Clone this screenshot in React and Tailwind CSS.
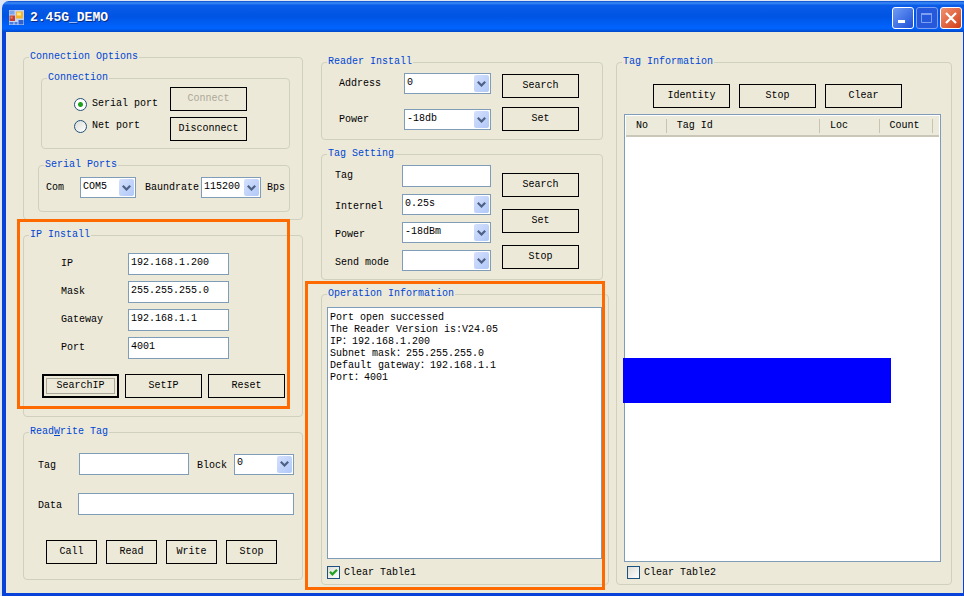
import { useId, useState } from 'react'

// ── Small controls ────────────────────────────────────────────────────────────
function Group({ title, className = '', bodyClass = '', children }) {
  return (
    <fieldset className={`relative min-w-0 rounded-[4px] border border-[#d0d0bf] ${className}`}>
      <legend className="ml-[5px] px-px text-[10px] leading-3 text-[#0046d5]">{title}</legend>
      <div className={bodyClass}>{children}</div>
    </fieldset>
  )
}

function Button({ className = 'w-[77px]', focused, children, ...rest }) {
  return (
    <button
      type="button"
      className={[
        'h-6 p-0.5 text-center leading-3 disabled:text-[#aca899]',
        focused ? 'border-2 border-black' : 'border border-black',
        className,
      ].join(' ')}
      {...rest}
    >
      {focused ? (
        <span className="block h-full border border-[#aca899] leading-[14px]">{children}</span>
      ) : (
        children
      )}
    </button>
  )
}

function TextBox({ className = '', ...rest }) {
  return (
    <input
      type="text"
      className={`h-[22px] min-w-0 border border-[#7f9db9] bg-white px-0.5 pb-1 outline-none ${className}`}
      {...rest}
    />
  )
}

function Select({ className = '', options, ...rest }) {
  return (
    <span className={`relative block h-[21px] ${className}`}>
      <select
        className="block h-full w-full appearance-none border border-[#7f9db9] bg-white pr-4 pb-0.5 pl-0.5 outline-none"
        {...rest}
      >
        {options.map((o) => (
          <option key={o}>{o}</option>
        ))}
      </select>
      <span className="pointer-events-none absolute top-0.5 right-0.5 bottom-0.5 flex w-[15px] items-center justify-center rounded-[2px] bg-linear-to-br from-[#d5e0fd] to-[#b0c8f8]">
        <svg width="9" height="6" viewBox="0 0 9 6" fill="none" stroke="#4d6185" strokeWidth="2.2">
          <path d="M0.8 0.8 4.5 4.5 8.2 0.8" />
        </svg>
      </span>
    </span>
  )
}

function Radio({ label, ...rest }) {
  return (
    <label className="flex h-[22px] items-center gap-[5px]">
      <input
        type="radio"
        className="size-[13px] appearance-none rounded-full border border-[#21517b] bg-linear-to-br from-[#dcdcd7] to-white checked:bg-[radial-gradient(circle,#21a121_0_2px,#fff_3px)]"
        {...rest}
      />
      {label}
    </label>
  )
}

function CheckBox({ label, ...rest }) {
  return (
    <label className="flex items-center gap-1">
      <span className="relative block size-[13px]">
        <input
          type="checkbox"
          className="peer block size-[13px] appearance-none border border-[#1c5180] bg-linear-to-br from-[#dcdcd7] to-white"
          {...rest}
        />
        <svg
          className="pointer-events-none absolute inset-0 hidden peer-checked:block"
          width="13" height="13" viewBox="0 0 13 13"
          fill="none" stroke="#21a121" strokeWidth="2.2"
        >
          <path d="M3 5.8 5.4 8.4 10 3.8" />
        </svg>
      </span>
      {label}
    </label>
  )
}

// ── Title bar ─────────────────────────────────────────────────────────────────
function AppIcon() {
  return (
    <svg width="15" height="15" viewBox="0 0 15 15">
      <rect width="15" height="15" fill="#c3d5f5" />
      <rect x="0.5" y="0.5" width="5" height="4" fill="#7ea3e6" />
      <rect x="0.5" y="5.5" width="5.5" height="5.5" fill="#c8402c" />
      <rect x="1.5" y="6.5" width="2" height="2" fill="#e8836c" />
      <rect x="7" y="1.5" width="7" height="7" fill="#f2b62c" />
      <rect x="8" y="2.5" width="4" height="3" fill="#ffe48c" />
      <rect x="0.5" y="12" width="4" height="2.5" fill="#4a7ade" />
      <rect x="5.5" y="12" width="3" height="2.5" fill="#4a7ade" />
      <rect x="9.5" y="10" width="5" height="4.5" fill="#2f62cf" />
    </svg>
  )
}

const CAPTION = 'flex size-[22px] items-center justify-center rounded-[3px] border'

function TitleBar() {
  return (
    <header className="flex h-[31px] items-center gap-[6px] rounded-tl-[7px] bg-[linear-gradient(#0a48c8_0%,#3c8cf8_6%,#0a5ce8_14%,#0054e3_50%,#0064ff_88%,#0048c8_100%)] pt-0.5 pr-0.5 pl-[7px]">
      <AppIcon />
      <h1 className="flex-1 text-[13px] leading-4 font-bold text-white [text-shadow:1px_1px_#0a2a80]">
        2.45G_DEMO
      </h1>
      <div className="flex gap-0.5">
        <button type="button" aria-label="Minimize" className={`${CAPTION} border-white bg-linear-to-br from-[#6f9bf5] to-[#1f4fd8]`}>
          <svg width="14" height="14" viewBox="0 0 14 14"><rect x="2" y="9" width="7" height="3" fill="#fff" /></svg>
        </button>
        <button type="button" aria-label="Maximize" disabled className={`${CAPTION} border-[#7f9ff0] bg-[#2558da]`}>
          <svg width="14" height="14" viewBox="0 0 14 14" fill="none" stroke="#7f9ff0">
            <path d="M1.5 2.5h10v9h-10z" />
            <path d="M1 3h11" strokeWidth="2" />
          </svg>
        </button>
        <button type="button" aria-label="Close" className={`${CAPTION} border-white bg-linear-to-br from-[#f0906f] to-[#d03a10]`}>
          <svg width="14" height="14" viewBox="0 0 14 14" stroke="#fff" strokeWidth="2.2"><path d="M2 2 12 12M12 2 2 12" /></svg>
        </button>
      </div>
    </header>
  )
}

// ── Left column ───────────────────────────────────────────────────────────────
function ConnectionOptions() {
  const id = useId()
  const [mode, setMode] = useState('serial')

  return (
    <Group title="Connection Options" bodyClass="pt-[9px] pr-3 pb-[7px] pl-[14px]">
      <Group title="Connection" className="ml-[3px]" bodyClass="flex gap-3 pt-[3px] pb-[7px] pl-8">
        <div className="pt-[6px]">
          <Radio name="mode" label="Serial port" checked={mode === 'serial'} onChange={() => setMode('serial')} />
          <Radio name="mode" label="Net port" checked={mode === 'net'} onChange={() => setMode('net')} />
        </div>
        <div className="flex flex-col gap-[6px]">
          <Button disabled>Connect</Button>
          <Button>Disconnect</Button>
        </div>
      </Group>

      <Group title="Serial Ports" className="mt-2.5" bodyClass="flex items-center pt-[6px] pb-[13px] pl-[7px]">
        <label htmlFor={`${id}com`} className="w-[34px]">Com</label>
        <Select id={`${id}com`} className="w-14" options={['COM5']} />
        <label htmlFor={`${id}baud`} className="ml-[9px] w-14">Baundrate</label>
        <Select id={`${id}baud`} className="w-[60px]" options={['115200']} />
        <span className="ml-[6px]">Bps</span>
      </Group>
    </Group>
  )
}

const IP_FIELDS = [
  ['IP', '192.168.1.200'],
  ['Mask', '255.255.255.0'],
  ['Gateway', '192.168.1.1'],
  ['Port', '4001'],
]

function IpInstall() {
  return (
    <Group title="IP Install" bodyClass="pt-3 pb-[18px]">
      <div className="flex flex-col gap-[6px] pl-[37px]">
        {IP_FIELDS.map(([label, value]) => (
          <label key={label} className="flex items-center">
            <span className="w-[67px]">{label}</span>
            <TextBox className="w-[101px]" defaultValue={value} />
          </label>
        ))}
      </div>
      <div className="flex gap-[6px] pt-[15px] pl-[18px]">
        <Button focused>SearchIP</Button>
        <Button>SetIP</Button>
        <Button>Reset</Button>
      </div>
      <div className="pointer-events-none absolute -top-[22px] right-3 bottom-[7px] -left-[7px] border-3 border-[#ff6a00]" />
    </Group>
  )
}

function ReadWriteTag() {
  const id = useId()

  return (
    <Group title={<>Read<u>W</u>rite Tag</>} bodyClass="pt-[15px] pr-2 pb-[15px] pl-[14px]">
      <div className="flex items-center">
        <label htmlFor={`${id}tag`} className="w-[41px] pt-1">Tag</label>
        <TextBox id={`${id}tag`} className="flex-1" />
        <label htmlFor={`${id}block`} className="w-[45px] pt-1 pl-2">Block</label>
        <Select id={`${id}block`} className="w-[60px]" options={['0']} />
      </div>
      <div className="flex items-center pt-[18px]">
        <label htmlFor={`${id}data`} className="w-10 pt-1">Data</label>
        <TextBox id={`${id}data`} className="flex-1" />
      </div>
      <div className="flex gap-[9px] pt-[25px] pl-2">
        {['Call', 'Read', 'Write', 'Stop'].map((t) => (
          <Button key={t} className="w-[51px]">{t}</Button>
        ))}
      </div>
    </Group>
  )
}

// ── Middle column ─────────────────────────────────────────────────────────────
function ReaderInstall() {
  return (
    <Group title="Reader Install" className="mr-[6px]" bodyClass="flex gap-[11px] pt-[5px] pb-2 pl-[17px]">
      <div className="flex flex-col gap-[15px]">
        <label className="flex items-center">
          <span className="w-[65px]">Address</span>
          <Select className="w-[87px]" options={['0']} />
        </label>
        <label className="flex items-center">
          <span className="w-[65px]">Power</span>
          <Select className="w-[87px]" options={['-18db']} />
        </label>
      </div>
      <div className="flex flex-col gap-[9px] pt-px">
        <Button>Search</Button>
        <Button>Set</Button>
      </div>
    </Group>
  )
}

const TAG_SELECTS = [
  ['Internel', '0.25s'],
  ['Power', '-18dBm'],
  ['Send mode', ''],
]

function TagSetting() {
  return (
    <Group title="Tag Setting" className="mr-[6px]" bodyClass="flex gap-[11px] pt-[5px] pb-2 pl-[13px]">
      <div className="flex flex-col gap-[7px]">
        <label className="flex items-center">
          <span className="w-[67px]">Tag</span>
          <TextBox className="w-[89px]" />
        </label>
        {TAG_SELECTS.map(([label, value]) => (
          <label key={label} className="flex items-center">
            <span className="w-[67px] pt-1">{label}</span>
            <Select className="w-[89px]" options={[value]} />
          </label>
        ))}
      </div>
      <div className="flex flex-col gap-3 pt-2">
        <Button>Search</Button>
        <Button>Set</Button>
        <Button>Stop</Button>
      </div>
    </Group>
  )
}

const LOG = `Port open successed
The Reader Version is:V24.05
IP：192.168.1.200
Subnet mask：255.255.255.0
Default gateway：192.168.1.1
Port：4001`

function OperationInformation() {
  return (
    <Group
      title="Operation Information"
      className="flex flex-1 flex-col"
      bodyClass="flex flex-1 flex-col pt-[7px] pr-[6px] pb-[5px] pl-[5px]"
    >
      <textarea
        aria-label="Operation Information"
        className="min-h-40 w-full flex-1 resize-none border border-[#7f9db9] bg-white px-0.5 py-1 leading-3 outline-none"
        defaultValue={LOG}
      />
      <div className="pt-[7px]">
        <CheckBox label="Clear Table1" defaultChecked />
      </div>
      <div className="pointer-events-none absolute -top-[19px] right-[3px] -bottom-[6px] -left-[17px] border-3 border-[#ff6a00]" />
    </Group>
  )
}

// ── Right column ──────────────────────────────────────────────────────────────
const COLUMNS = [
  ['No', 'w-[13%]'],
  ['Tag Id', 'w-[49%]'],
  ['Loc', 'w-[19%]'],
  ['Count', 'w-[17%]'],
]

function TagInformation() {
  return (
    <Group
      title="Tag Information"
      className="flex flex-1 flex-col"
      bodyClass="flex flex-1 flex-col pt-4 pr-[10px] pb-[5px] pl-[7px]"
    >
      <div className="flex gap-[9px] pl-[29px]">
        <Button>Identity</Button>
        <Button>Stop</Button>
        <Button>Clear</Button>
      </div>
      <div className="relative mt-[6px] min-h-40 flex-1 border border-[#7f9db9] bg-white p-px">
        <table className="w-full table-fixed border-b-2 border-[#cbc7b8] bg-[#ebeadb] text-left">
          <thead>
            <tr className="h-5">
              {COLUMNS.map(([name, width]) => (
                <th key={name} scope="col" className={`${width} p-0 font-normal`}>
                  <span className="block border-r border-[#c7c5b2] pl-[10px] leading-[14px]">{name}</span>
                </th>
              ))}
              <td />
            </tr>
          </thead>
        </table>
        <div className="absolute top-[54.5%] right-[49px] -left-0.5 h-[45px] bg-[#0000ff]" />
      </div>
      <div className="pt-1 pl-[3px]">
        <CheckBox label="Clear Table2" />
      </div>
    </Group>
  )
}

// ── Main window ───────────────────────────────────────────────────────────────
export default function App() {
  return (
    <div className="flex min-h-screen flex-col bg-[#dfe6f5] pt-px pl-0.5 font-['Liberation_Mono','Noto_Sans_CJK_SC',monospace] text-[10px] leading-3 text-black">
      <TitleBar />
      <main className="grid flex-1 grid-cols-[minmax(0,280fr)_minmax(0,299fr)_minmax(0,336fr)] gap-[7px] border-r border-b-3 border-l-4 border-[#0842d8] bg-[#ece9d8] pt-[19px] pr-[11px] pb-2 pl-[17px]">
        <div className="flex flex-col gap-[9px]">
          <ConnectionOptions />
          <IpInstall />
          <ReadWriteTag />
        </div>
        <div className="flex flex-col gap-2 pt-[5px] pl-[11px]">
          <ReaderInstall />
          <TagSetting />
          <OperationInformation />
        </div>
        <div className="flex flex-col pt-[5px]">
          <TagInformation />
        </div>
      </main>
    </div>
  )
}
